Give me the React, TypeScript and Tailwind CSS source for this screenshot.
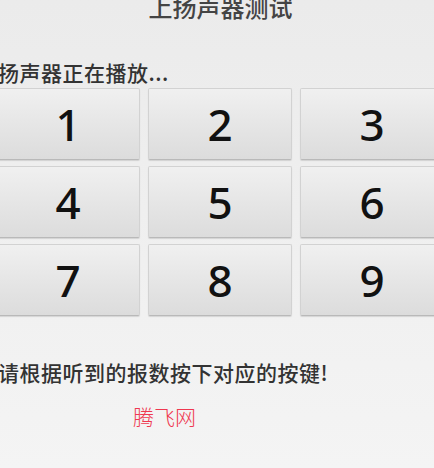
import React from 'react';

const keys = ['1', '2', '3', '4', '5', '6', '7', '8', '9'];

function KeyButton({ label }: { label: string }) {
  return (
    <button
      type="button"
      className="h-[72px] rounded-[2px] border border-[#d2d2d2] border-b-[#b9b9b9] bg-gradient-to-b from-[#f0f0f0] to-[#dcdcdc] shadow-[0_1px_1px_rgba(0,0,0,0.12)] flex items-center justify-center text-[44px] leading-none font-medium text-[#111] font-['Noto_Sans',sans-serif]"
    >
      {label}
    </button>
  );
}

export default function App() {
  return (
    <div className="w-[434px] h-[468px] overflow-hidden bg-gradient-to-b from-[#ebebeb] to-[#f4f4f4] font-['Noto_Sans_CJK_SC','Noto_Sans',sans-serif] flex flex-col">
      <h1 className="-mt-[5px] pl-[7px] text-center text-[24px] leading-[24px] font-medium text-[#444]">上扬声器测试</h1>

      <p className="mt-[43px] -ml-[2px] text-[21px] leading-[20px] tracking-[0.5px] font-medium text-[#333]">扬声器正在播放...</p>

      <div className="mt-[6px] -ml-[4px] w-[448px] grid grid-cols-[144px_144px_144px] gap-x-[8px] gap-y-[6px]">
        {keys.map((k) => (
          <KeyButton key={k} label={k} />
        ))}
      </div>

      <p className="mt-[46px] -ml-[2px] text-[21px] leading-[20px] tracking-[0.5px] font-medium text-[#333]">请根据听到的报数按下对应的按键!</p>

      <p className="mt-[24px] ml-[133px] text-[21px] leading-[20px] font-light text-[#ef3850]">腾飞网</p>
    </div>
  );
}
